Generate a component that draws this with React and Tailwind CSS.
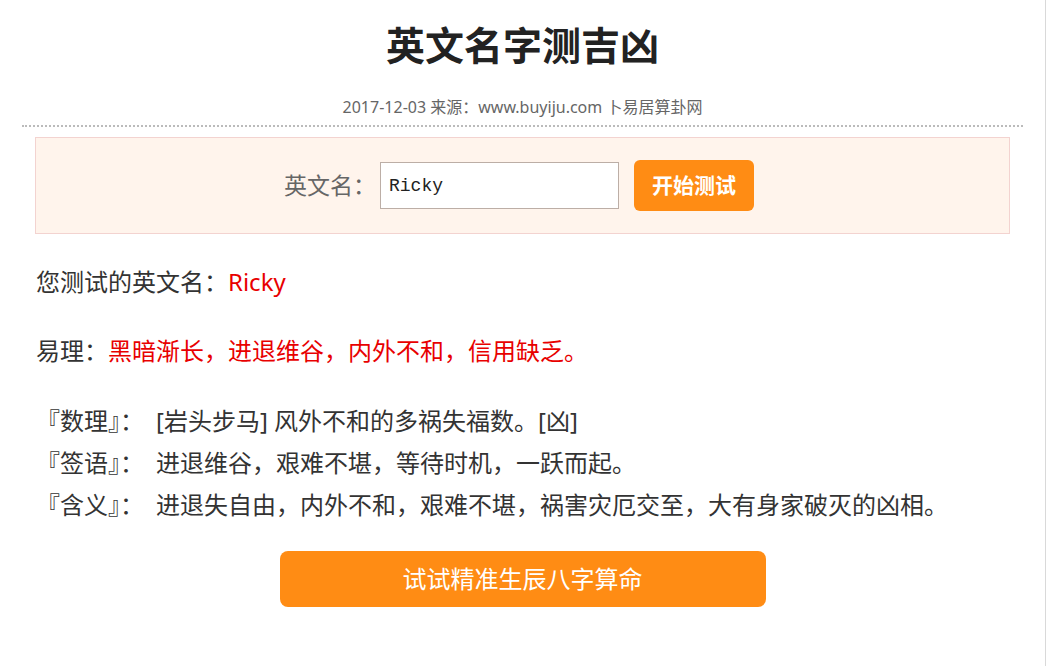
import React from 'react'

const font = { fontFamily: '"Noto Sans", "Noto Sans CJK SC", sans-serif' }

const lines = [
  { tag: '『数理』：', text: '[岩头步马] 风外不和的多祸失福数。[凶]' },
  { tag: '『签语』：', text: '进退维谷，艰难不堪，等待时机，一跃而起。' },
  { tag: '『含义』：', text: '进退失自由，内外不和，艰难不堪，祸害灾厄交至，大有身家破灭的凶相。' },
]

export default function App() {
  return (
    <div className="flex min-h-[666px] bg-white" style={font}>
      <div className="w-[1046px] border-r border-[#d9d9d9] px-[22px]">
        {/* header */}
        <div className="border-b-2 border-dotted border-[#bbb] pb-[8px] text-center">
          <h1 className="pt-[19px] text-[39px] font-bold leading-[52px] text-[#222]">英文名字测吉凶</h1>
          <div className="mt-[26px] text-[16px] leading-[20px] text-[#666]">2017-12-03 来源：www.buyiju.com 卜易居算卦网</div>
        </div>

        {/* form */}
        <div className="mx-[13px] mt-[10px] flex h-[97px] items-center justify-center border border-[#f3d3d0] bg-[#fff4ec] pr-[7px]">
          <span className="mr-[4px] text-[23px] text-[#666]">英文名：</span>
          <input
            readOnly
            value="Ricky"
            className="h-[47px] w-[239px] border border-[#bcaea6] bg-white px-[8px] text-[18px] text-[#222] outline-none"
            style={{ fontFamily: '"Liberation Mono", "DejaVu Sans Mono", monospace' }}
          />
          <button className="ml-[15px] h-[51px] w-[120px] rounded-[6px] bg-[#ff8c14] text-[21px] font-bold text-white">开始测试</button>
        </div>

        {/* result */}
        <div className="px-[14px] text-[24px] leading-[42px] text-[#333]">
          <p className="mt-[27px]">您测试的英文名：<span className="text-[#e80000]">Ricky</span></p>
          <p className="mt-[27px]">易理：<span className="text-[#e80000]">黑暗渐长，进退维谷，内外不和，信用缺乏。</span></p>
          <div className="mt-[28px]">
            {lines.map(l => (
              <p key={l.tag}><span className="pr-[12px]">{l.tag}</span>{l.text}</p>
            ))}
          </div>
        </div>

        <div className="mt-[25px] flex justify-center">
          <button className="h-[56px] w-[486px] rounded-[8px] bg-[#ff8c14] text-[24px] text-white">试试精准生辰八字算命</button>
        </div>
      </div>
    </div>
  )
}
